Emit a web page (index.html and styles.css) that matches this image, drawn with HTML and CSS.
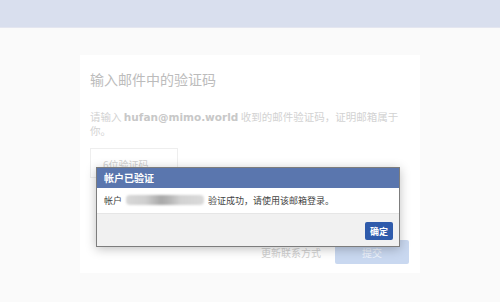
FILE: index.html
```html
<!DOCTYPE html>
<html>
  <head>
    <meta charset="utf-8" />
    <title>验证邮箱</title>
    <meta name="viewport" content="width=device-width, initial-scale=1" />
    <link rel="stylesheet" href="styles.css">
  </head>

  <body>
    <div class="topbar"></div>

    <div class="card">
      <h2 class="card-title">输入邮件中的验证码</h2>
      <p class="card-text">
        请输入 <b class="mail">hufan@mimo.world</b> 收到的邮件验证码，证明邮箱属于你。
      </p>
      <div class="code-input">6位验证码</div>
      <div class="card-actions">
        <span class="link">更新联系方式</span>
        <button class="submit">提交</button>
      </div>
    </div>

    <div class="dialog">
      <div class="dialog-head">帐户已验证</div>
      <div class="dialog-body">
        帐户 <span class="blurred"></span> 验证成功，请使用该邮箱登录。
      </div>
      <div class="dialog-foot">
        <button class="ok">确定</button>
      </div>
    </div>
  </body>
</html>
```

FILE: styles.css
```css
body {
  margin: 0;
  background: #fafafa;
  font-family: "Noto Sans CJK SC", "Noto Sans", sans-serif;
  position: relative;
  height: 302px;
  overflow: hidden;
}

.topbar {
  height: 27px;
  background: #d9dfee;
  border-bottom: 1px solid #e4e6f0;
}

.card {
  width: 340px;
  box-sizing: border-box;
  margin: 27px auto 0;
  padding: 14px 11px 9px 10px;
  background: #fff;
}

.card-title {
  margin: 0;
  font-size: 14px;
  line-height: 20px;
  font-weight: normal;
  color: #bcbcbc;
}

.card-text {
  margin: 21px 0 0;
  padding-right: 8px;
  font-size: 10.5px;
  line-height: 14px;
  color: #d2d2d2;
}

.mail {
  font-family: "DejaVu Sans", sans-serif;
  font-size: 10.5px;
  color: #c8c8c8;
}

.code-input {
  margin-top: 10px;
  width: 88px;
  height: 30px;
  box-sizing: border-box;
  border: 1px solid #eeeeee;
  padding: 8px 0 0 12px;
  font-size: 10px;
  color: #cfcfcf;
}

.card-actions {
  margin-top: 62px;
  display: flex;
  justify-content: flex-end;
  align-items: center;
  gap: 14px;
}

.link {
  font-size: 10px;
  color: #cfcfcf;
}

.submit {
  width: 74px;
  height: 24px;
  border: none;
  border-radius: 2px;
  background: #c9d8f0;
  color: #eef3fb;
  font-family: inherit;
  font-size: 10px;
}

.dialog {
  position: absolute;
  left: 96px;
  top: 167px;
  width: 304px;
  box-sizing: border-box;
  border: 1px solid #7d7d7d;
  background: #fff;
  box-shadow: 0 2px 10px rgba(0, 0, 0, 0.25);
}

.dialog-head {
  height: 20px;
  line-height: 20px;
  padding-left: 7px;
  background: #5a76ae;
  color: #fff;
  font-size: 10px;
  font-weight: bold;
}

.dialog-body {
  height: 25px;
  line-height: 25px;
  padding-left: 7px;
  font-size: 9px;
  color: #444;
}

.blurred {
  display: inline-block;
  width: 78px;
  height: 10px;
  margin: 0 2px;
  vertical-align: -1px;
  border-radius: 4px;
  background: linear-gradient(90deg, #d8d8d8 0%, #cfcfcf 25%, #a9a9a9 45%, #b5b5b5 55%, #d2d2d2 70%, #dadada 100%);
  filter: blur(1px);
}

.dialog-foot {
  height: 33px;
  box-sizing: border-box;
  border-top: 1px solid #e6e6e6;
  background: #f1f1f1;
  display: flex;
  justify-content: flex-end;
  align-items: flex-start;
  padding: 8px 6px 0 0;
}

.ok {
  width: 28px;
  height: 18px;
  padding: 0;
  border: none;
  border-radius: 2px;
  background: #2f5bab;
  color: #fff;
  font-family: inherit;
  font-size: 9px;
  font-weight: bold;
}
```
